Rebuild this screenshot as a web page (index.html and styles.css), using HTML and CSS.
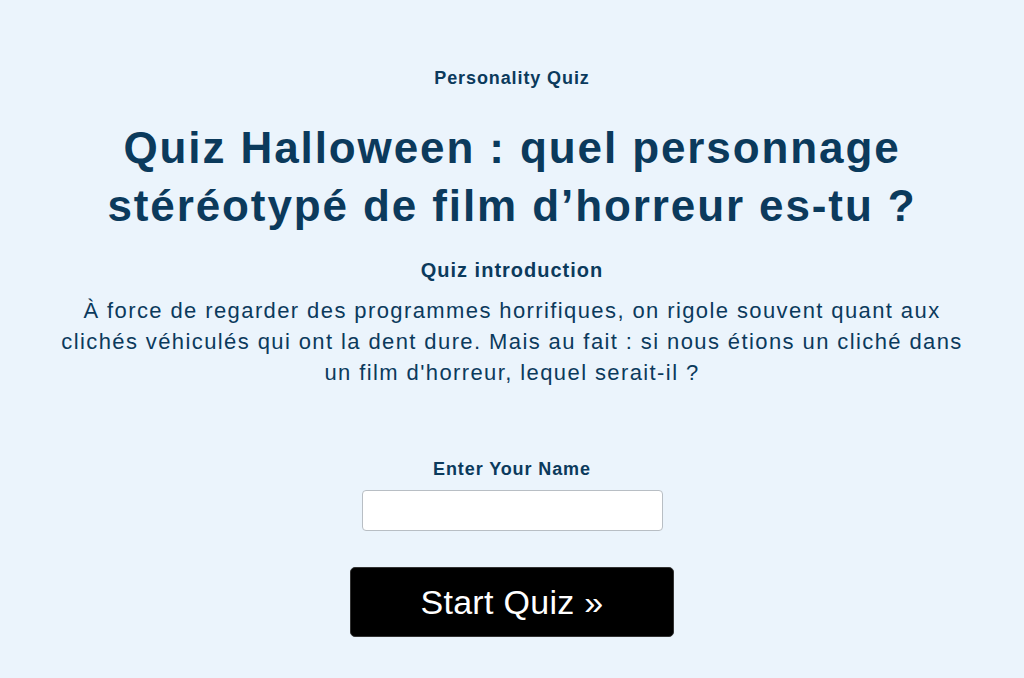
FILE: index.html
```html
<!DOCTYPE html>
<html lang="fr">
<head>
<meta charset="utf-8">
<title>Quiz Halloween</title>
<link rel="stylesheet" href="styles.css">
</head>
<body>
<main class="quiz">
  <div class="eyebrow">Personality Quiz</div>
  <h1 class="title">Quiz Halloween : quel personnage stéréotypé de film d’horreur es-tu ?</h1>
  <div class="intro-label">Quiz introduction</div>
  <p class="intro">À force de regarder des programmes horrifiques, on rigole souvent quant aux clichés véhiculés qui ont la dent dure. Mais au fait : si nous étions un cliché dans un film d'horreur, lequel serait-il ?</p>
  <form class="start">
    <label class="name-label" for="name">Enter Your Name</label>
    <input class="name-input" id="name" type="text">
    <button class="start-btn" type="button">Start Quiz »</button>
  </form>
</main>
</body>
</html>
```
FILE: styles.css
```css
html, body {
  margin: 0;
  padding: 0;
  background: #ebf4fc;
}
body {
  font-family: "Liberation Sans", Arial, sans-serif;
  color: #0b3a5c;
}
.quiz {
  display: flex;
  flex-direction: column;
  align-items: center;
  text-align: center;
  padding-top: 67px;
}
.eyebrow {
  font-weight: bold;
  font-size: 18px;
  line-height: 22px;
  letter-spacing: 0.9px;
}
.title {
  margin: 30px 0 0;
  width: 880px;
  font-size: 44px;
  line-height: 58px;
  font-weight: bold;
  letter-spacing: 1.9px;
}
.intro-label {
  margin-top: 23px;
  font-weight: bold;
  font-size: 20px;
  line-height: 24px;
  letter-spacing: 1px;
}
.intro {
  margin: 13px 0 0;
  width: 920px;
  font-size: 22px;
  line-height: 31px;
  letter-spacing: 1.4px;
}
.start {
  display: flex;
  flex-direction: column;
  align-items: center;
  margin-top: 70px;
}
.name-label {
  font-weight: bold;
  font-size: 18px;
  line-height: 22px;
  letter-spacing: 0.9px;
}
.name-input {
  margin-top: 10px;
  box-sizing: border-box;
  width: 301px;
  height: 41px;
  border: 1px solid #b8bec4;
  border-radius: 4px;
  background: #fff;
  font-size: 18px;
  padding: 0 10px;
}
.start-btn {
  margin-top: 36px;
  box-sizing: border-box;
  width: 324px;
  height: 70px;
  background: #000;
  color: #fff;
  border: 1px solid #333;
  border-radius: 5px;
  font-family: "Liberation Sans", Arial, sans-serif;
  font-size: 34px;
  line-height: 40px;
  letter-spacing: 0.3px;
  cursor: pointer;
}
```
